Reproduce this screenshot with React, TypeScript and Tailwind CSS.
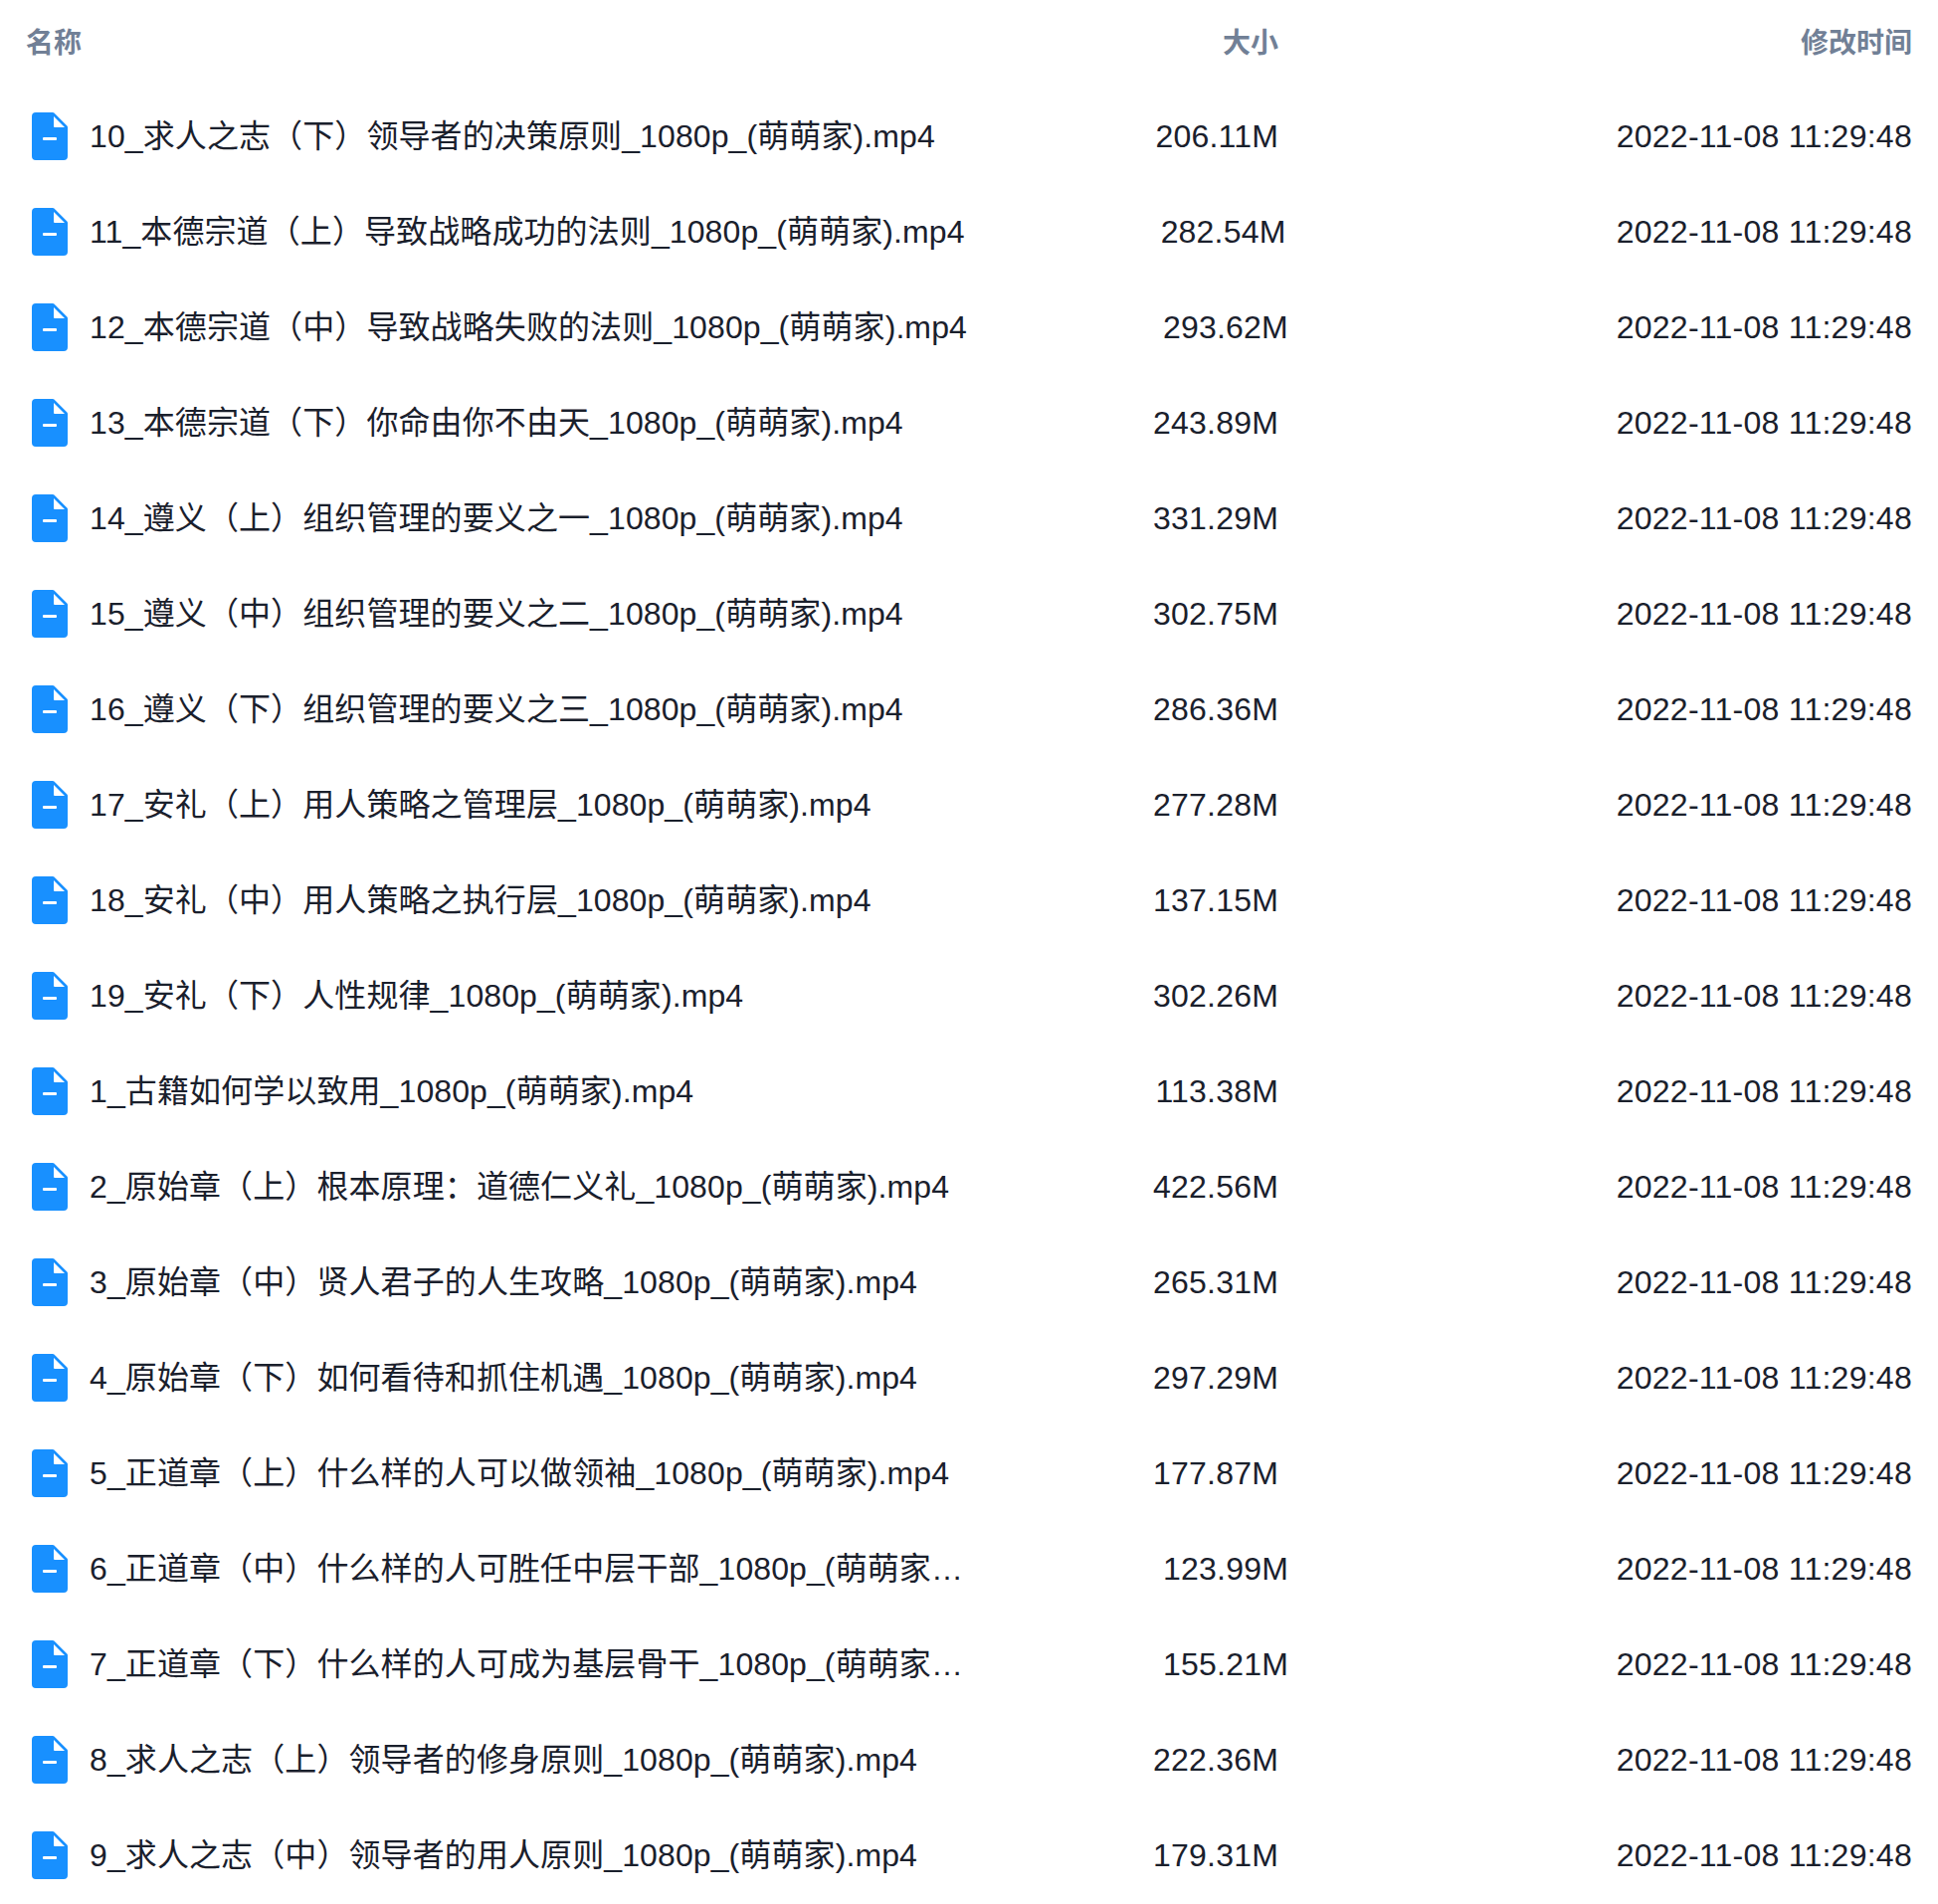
const FILES = [
  ['10_求人之志（下）领导者的决策原则_1080p_(萌萌家).mp4', '206.11M'],
  ['11_本德宗道（上）导致战略成功的法则_1080p_(萌萌家).mp4', '282.54M'],
  ['12_本德宗道（中）导致战略失败的法则_1080p_(萌萌家).mp4', '293.62M'],
  ['13_本德宗道（下）你命由你不由天_1080p_(萌萌家).mp4', '243.89M'],
  ['14_遵义（上）组织管理的要义之一_1080p_(萌萌家).mp4', '331.29M'],
  ['15_遵义（中）组织管理的要义之二_1080p_(萌萌家).mp4', '302.75M'],
  ['16_遵义（下）组织管理的要义之三_1080p_(萌萌家).mp4', '286.36M'],
  ['17_安礼（上）用人策略之管理层_1080p_(萌萌家).mp4', '277.28M'],
  ['18_安礼（中）用人策略之执行层_1080p_(萌萌家).mp4', '137.15M'],
  ['19_安礼（下）人性规律_1080p_(萌萌家).mp4', '302.26M'],
  ['1_古籍如何学以致用_1080p_(萌萌家).mp4', '113.38M'],
  ['2_原始章（上）根本原理：道德仁义礼_1080p_(萌萌家).mp4', '422.56M'],
  ['3_原始章（中）贤人君子的人生攻略_1080p_(萌萌家).mp4', '265.31M'],
  ['4_原始章（下）如何看待和抓住机遇_1080p_(萌萌家).mp4', '297.29M'],
  ['5_正道章（上）什么样的人可以做领袖_1080p_(萌萌家).mp4', '177.87M'],
  ['6_正道章（中）什么样的人可胜任中层干部_1080p_(萌萌家).mp4', '123.99M'],
  ['7_正道章（下）什么样的人可成为基层骨干_1080p_(萌萌家).mp4', '155.21M'],
  ['8_求人之志（上）领导者的修身原则_1080p_(萌萌家).mp4', '222.36M'],
  ['9_求人之志（中）领导者的用人原则_1080p_(萌萌家).mp4', '179.31M'],
]

function FileIcon() {
  return (
    <svg width="36" height="48" viewBox="0 0 36 48" className="shrink-0">
      <path d="M4 0H21a2 2 0 0 1 1.4.6L35.4 13.6a2 2 0 0 1 .6 1.4V44a4 4 0 0 1-4 4H4a4 4 0 0 1-4-4V4a4 4 0 0 1 4-4z" fill="#1890ff" />
      <path d="M22 4L33 15H23a1 1 0 0 1-1-1z" fill="#fff" />
      <rect x="11" y="25" width="14" height="3" rx="1" fill="#fff" />
    </svg>
  )
}

export default function App() {
  return (
    <div className="min-h-screen bg-white px-[26px] text-[32px] text-[#1a202c] font-['Liberation_Sans','Noto_Sans_CJK_SC',sans-serif] [text-rendering:optimizeLegibility]">
      {/* header */}
      <div className="flex h-[89px] items-center pb-[2px] text-[28px] font-bold text-[#718096]">
        <div className="w-[936px] shrink-0">名称</div>
        <div className="w-[323px] shrink-0 text-right">大小</div>
        <div className="flex-1 text-right">修改时间</div>
      </div>

      {FILES.map(([name, size]) => (
        <div key={name} className="flex h-[96px] items-center">
          <div className="flex min-w-[936px] max-w-[946px] shrink-0 items-center pl-[6px]">
            <FileIcon />
            <span className="ml-[22px] truncate tracking-[0.1px]">{name}</span>
          </div>
          <div className="w-[323px] shrink-0 text-right tracking-[0.2px]">{size}</div>
          <div className="flex-1 text-right tracking-[0.26px]">2022-11-08 11:29:48</div>
        </div>
      ))}
    </div>
  )
}
